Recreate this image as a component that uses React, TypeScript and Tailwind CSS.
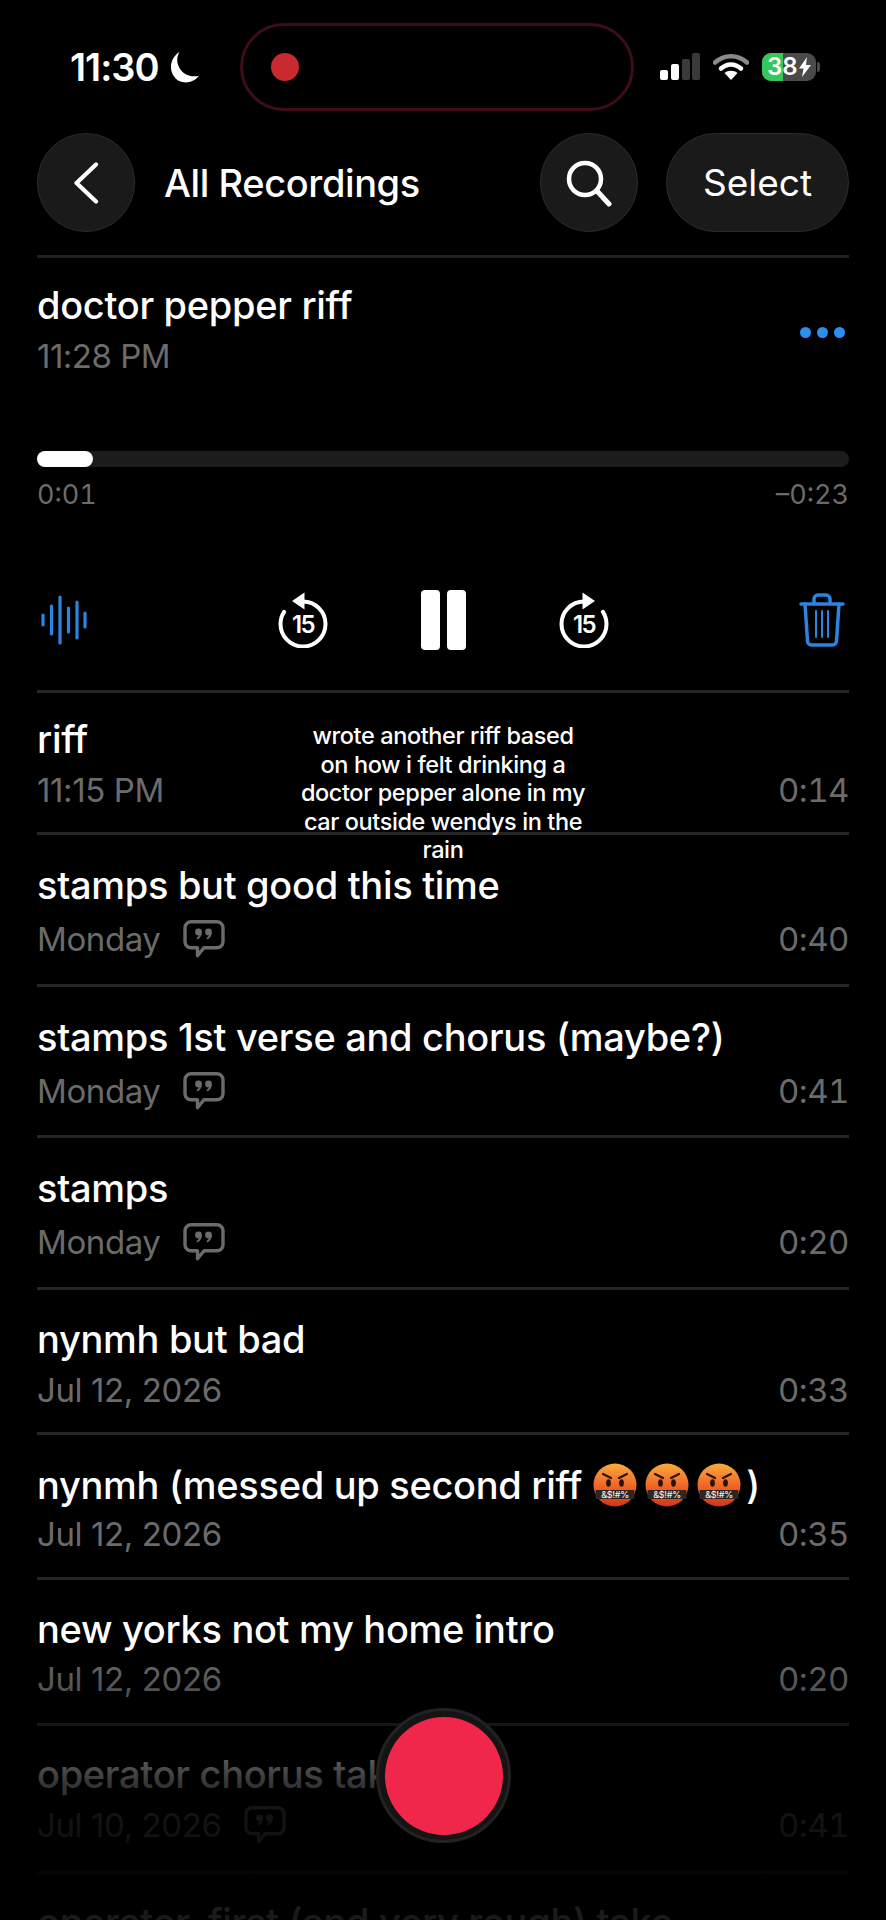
import { Fragment } from "react";

const RECORDINGS = [
  { title: "riff", sub: "11:15 PM", time: "0:14", note: false, height: "h-[142px]", pad: "pt-[24px]", gap: "mt-[9px]" },
  { title: "stamps but good this time", sub: "Monday", time: "0:40", note: true, height: "h-[152px]", pad: "pt-[28px]", gap: "mt-[12px]" },
  { title: "stamps 1st verse and chorus (maybe?)", sub: "Monday", time: "0:41", note: true, height: "h-[151px]", pad: "pt-[28px]", gap: "mt-[12px]" },
  { title: "stamps", sub: "Monday", time: "0:20", note: true, height: "h-[152px]", pad: "pt-[28px]", gap: "mt-[12px]" },
  { title: "nynmh but bad", sub: "Jul 12, 2026", time: "0:33", note: false, height: "h-[145px]", pad: "pt-[27px]", gap: "mt-[9px]" },
  { title: "nynmh (messed up second riff", sub: "Jul 12, 2026", time: "0:35", note: false, height: "h-[145px]", pad: "pt-[28px]", gap: "mt-[7px]", emoji: true },
  { title: "new yorks not my home intro", sub: "Jul 12, 2026", time: "0:20", note: false, height: "h-[146px]", pad: "pt-[27px]", gap: "mt-[8px]" },
  { title: "operator chorus take", sub: "Jul 10, 2026", time: "0:41", note: true, height: "h-[148px]", pad: "pt-[26px]", gap: "mt-[9px]" },
  { title: "operator, first (and very rough) take", sub: "Jul 10, 2026", time: "0:52", note: false, height: "h-[148px]", pad: "pt-[26px]", gap: "mt-[8px]" },
];

function CursingEmoji() {
  return (
    <svg viewBox="0 0 44 44" className="w-[44px] h-[44px] shrink-0">
      <defs>
        <linearGradient id="angry" x1="0" y1="0" x2="0" y2="1">
          <stop offset="0" stopColor="#fbab3c" />
          <stop offset="0.55" stopColor="#ef6226" />
          <stop offset="1" stopColor="#d0351a" />
        </linearGradient>
      </defs>
      <circle cx="22" cy="22" r="21.500" fill="url(#angry)" />
      <path d="M10 11 L18 15 M34 11 L26 15" stroke="#2a1408" strokeWidth="2.200" strokeLinecap="round" />
      <ellipse cx="15.500" cy="20" rx="2.400" ry="3.800" fill="#2a1408" />
      <ellipse cx="28.500" cy="20" rx="2.400" ry="3.800" fill="#2a1408" />
      <rect x="2.500" y="27" width="39" height="9" rx="1" fill="#2f2623" />
      <text x="22" y="34.500" textAnchor="middle" fontSize="9" fill="#eeeeee" fontFamily="Inter, sans-serif">
        &amp;$!#%
      </text>
    </svg>
  );
}

function NoteIcon() {
  return (
    <svg viewBox="0 0 42 38" className="w-[42px] h-[38px]" fill="none">
      <path
        d="M8 1.800h26a6 6 0 0 1 6 6v14a6 6 0 0 1-6 6H21l-6.500 8v-8H8a6 6 0 0 1-6-6v-14a6 6 0 0 1 6-6z"
        stroke="currentColor"
        strokeWidth="3.400"
        strokeLinejoin="round"
      />
      <circle cx="15.500" cy="12" r="3.400" fill="currentColor" />
      <path d="M18.900 12c0 3.500-1.600 6-4.600 7.500l-.8-1.400c1.800-1.200 2.700-2.600 2.900-4.500z" fill="currentColor" />
      <circle cx="25.500" cy="12" r="3.400" fill="currentColor" />
      <path d="M28.900 12c0 3.500-1.600 6-4.600 7.500l-.8-1.400c1.800-1.200 2.700-2.600 2.900-4.500z" fill="currentColor" />
    </svg>
  );
}

function Skip({ forward }: { forward?: boolean }) {
  return (
    <svg viewBox="0 0 52 56" className="w-[52px] h-[56px]" fill="none">
      <g transform={forward ? "translate(52 0) scale(-1 1)" : undefined}>
        <path
          d="M26 9.500a22.500 22.500 0 1 1-22.500 22.500c0-4.500 1.300-8.700 3.600-12.200"
          stroke="#fff"
          strokeWidth="4"
          strokeLinecap="round"
        />
        <path d="M27.500 0.500v17L15 9z" fill="#fff" />
      </g>
      <text x="26" y="41" textAnchor="middle" fontSize="24" fontWeight="600" fill="#fff" fontFamily="Inter, sans-serif" letterSpacing="-1.500">
        15
      </text>
    </svg>
  );
}

function StatusIcons() {
  return (
    <div className="flex items-center gap-[13px]">
      <svg viewBox="0 0 40 28" className="w-[40px] h-[28px]">
        <rect x="0" y="17" width="8" height="10" rx="2" fill="#fff" />
        <rect x="11" y="11" width="8" height="16" rx="2" fill="#fff" />
        <rect x="22" y="6" width="8" height="21" rx="2" fill="#3a3a3a" />
        <rect x="32" y="0" width="8" height="27" rx="2" fill="#3a3a3a" />
      </svg>
      <svg viewBox="0 0 36 28" className="w-[36px] h-[28px]" fill="none">
        <path d="M2 9.500C11 1 25 1 34 9.500" stroke="#8a8a8a" strokeWidth="4.500" strokeLinecap="round" />
        <path d="M8 15.500C14 10 22 10 28 15.500" stroke="#fff" strokeWidth="4.500" strokeLinecap="round" />
        <path d="M18 27l-6.500-7c3.500-3 9.500-3 13 0z" fill="#fff" />
      </svg>
      <div className="flex items-center gap-[1px]">
        <div className="relative w-[54px] h-[28px] rounded-[9px] bg-[#4a4a4a] overflow-hidden flex items-center pl-[5px]">
          <div aria-hidden className="absolute inset-y-0 left-0 w-[21px] bg-[#34c759]" />
          <span className="relative text-white text-[24px] font-semibold leading-none">38</span>
          <svg viewBox="0 0 12 20" className="relative w-[12px] h-[20px] ml-[1px]">
            <path d="M8 0L0 11.500h4.500L3 20l9-12H7z" fill="#fff" />
          </svg>
        </div>
        <div className="w-[3px] h-[10px] rounded-r-full bg-[#4a4a4a]" />
      </div>
    </div>
  );
}

export default function App() {
  return (
    <div className="relative w-[886px] h-[1920px] overflow-hidden bg-black text-white font-['Inter',sans-serif]">
      {/* Status bar */}
      <div className="flex items-center h-[88px] mt-[23px] pl-[70px] pr-[66px]">
        <div className="flex items-center gap-[9px] w-[170px]">
          <span className="text-[38px] font-semibold tracking-[-1px] leading-none">11:30</span>
          <svg viewBox="0 0 30 32" className="w-[31px] h-[33px]">
            <path d="M11 1C3 6 0 17 6 25c5 7 17 8 24-1-9 2-17-2-20-10-2-5-1-9 1-13z" fill="#fff" />
          </svg>
        </div>
        <div className="w-[394px] h-[88px] rounded-[44px] border-[3px] border-[#3d0e17] flex items-center pl-[28px]">
          <div className="w-[28px] h-[28px] rounded-full bg-[#c92a2f]" />
        </div>
        <div className="ml-auto">
          <StatusIcons />
        </div>
      </div>

      {/* Nav */}
      <div className="flex items-center mt-[22px] mx-[37px] h-[99px]">
        <button className="w-[98px] h-[99px] rounded-full bg-[#1a1a1a] border border-[#2b2b2b] flex items-center justify-center">
          <svg viewBox="0 0 26 42" className="w-[26px] h-[42px]" fill="none">
            <path d="M23 2.500L3.500 21 23 39.500" stroke="#fff" strokeWidth="4.200" strokeLinecap="round" strokeLinejoin="round" />
          </svg>
        </button>
        <h1 className="ml-[29px] text-[38px] font-medium tracking-[-0.4px] leading-none">All Recordings</h1>
        <button className="ml-auto w-[98px] h-[99px] rounded-full bg-[#1a1a1a] border border-[#2b2b2b] flex items-center justify-center">
          <svg viewBox="0 0 48 48" className="w-[48px] h-[48px]" fill="none">
            <circle cx="20" cy="20" r="16" stroke="#fff" strokeWidth="4.500" />
            <path d="M32 32l12 13" stroke="#fff" strokeWidth="5" strokeLinecap="round" />
          </svg>
        </button>
        <button className="ml-[28px] w-[183px] h-[99px] rounded-[50px] bg-[#1a1a1a] border border-[#2b2b2b] text-[37px] leading-none">
          Select
        </button>
      </div>

      {/* Now playing */}
      <div className="mt-[23px] mx-[37px] h-[438px] border-t-[3px] border-b-[3px] border-t-[#1f1f1f] border-b-[#262626]">
        <div className="flex justify-between pt-[25px]">
          <div>
            <div className="text-[38px] font-medium tracking-[-0.3px] leading-[44px]">doctor pepper riff</div>
            <div className="mt-[9px] text-[33px] tracking-[-0.5px] leading-[40px] text-[#6b6b6b]">11:28 PM</div>
          </div>
          <div className="flex gap-[6px] mt-[44px] mr-[4px]">
            <div className="w-[11px] h-[11px] rounded-full bg-[#2a8fee]" />
            <div className="w-[11px] h-[11px] rounded-full bg-[#2a8fee]" />
            <div className="w-[11px] h-[11px] rounded-full bg-[#2a8fee]" />
          </div>
        </div>
        <div className="mt-[75px] h-[16px] rounded-full bg-[#1c1c1c]">
          <div className="w-[56px] h-[16px] rounded-full bg-white" />
        </div>
        <div className="flex justify-between mt-[13px] text-[27px] tabular-nums leading-[30px] text-[#6b6b6b]">
          <span>0:01</span>
          <span>–0:23</span>
        </div>
        <div className="flex items-center justify-between mt-[80px] px-[4px]">
          <svg viewBox="0 0 46 50" className="w-[46px] h-[50px]" fill="none" stroke="#2a85e0" strokeWidth="3.200" strokeLinecap="round">
            <path d="M2 20v10M10.500 11v28M19 2v46M27.500 13v24M36 7v36M44 18v14" />
          </svg>
          <div className="flex items-center gap-[92px]">
            <Skip />
            <div className="flex gap-[7px]">
              <div className="w-[19px] h-[60px] rounded-[4px] bg-white" />
              <div className="w-[19px] h-[60px] rounded-[4px] bg-white" />
            </div>
            <Skip forward />
          </div>
          <svg viewBox="0 0 46 54" className="w-[46px] h-[54px]" fill="none" stroke="#2a85e0" strokeWidth="3.500" strokeLinejoin="round" strokeLinecap="round">
            <path d="M2 11h42M15 11V6a4 4 0 0 1 4-4h8a4 4 0 0 1 4 4v5" />
            <path d="M6 11l2.500 37a4 4 0 0 0 4 4h21a4 4 0 0 0 4-4L40 11" />
            <path d="M17 18v26M23 18v26M29 18v26" strokeWidth="2" />
          </svg>
        </div>
      </div>

      {/* Recordings */}
      <div className="mx-[37px]">
        {RECORDINGS.map((r) => (
          <div key={r.title} className={`${r.height} ${r.pad} border-b-[3px] border-[#262626]`}>
            <div className="flex items-center text-[38px] font-medium tracking-[-0.3px] leading-[44px] whitespace-nowrap">
              {r.title}
              {r.emoji && (
                <Fragment>
                  <span className="flex gap-[8px] ml-[11px] mr-[5px]">
                    <CursingEmoji />
                    <CursingEmoji />
                    <CursingEmoji />
                  </span>
                  )
                </Fragment>
              )}
            </div>
            <div className={`${r.gap} flex items-center justify-between text-[33px] leading-[40px] text-[#6b6b6b]`}>
              <div className="flex items-center gap-[22px]">
                <span className="tracking-[-0.4px]">{r.sub}</span>
                {r.note && <NoteIcon />}
              </div>
              <span className="tabular-nums tracking-[-0.5px]">{r.time}</span>
            </div>
          </div>
        ))}
      </div>

      {/* Fade above record button */}
      <div aria-hidden className="absolute inset-x-0 bottom-0 h-[270px] bg-gradient-to-b from-transparent via-black/80 to-black/90" />

      {/* Video caption */}
      <p className="absolute left-[298px] top-[722px] w-[290px] text-center text-[23.500px] font-medium tracking-[-0.4px] leading-[28.500px]">
        wrote another riff based on how i felt drinking a doctor pepper alone in my car outside wendys in the rain
      </p>

      {/* Record */}
      <div className="absolute left-[376px] top-[1708px] w-[135px] h-[135px] rounded-full bg-[#141414] border-[3px] border-[#222] flex items-center justify-center">
        <div className="w-[118px] h-[118px] rounded-full bg-[#f0264a]" />
      </div>
    </div>
  );
}
